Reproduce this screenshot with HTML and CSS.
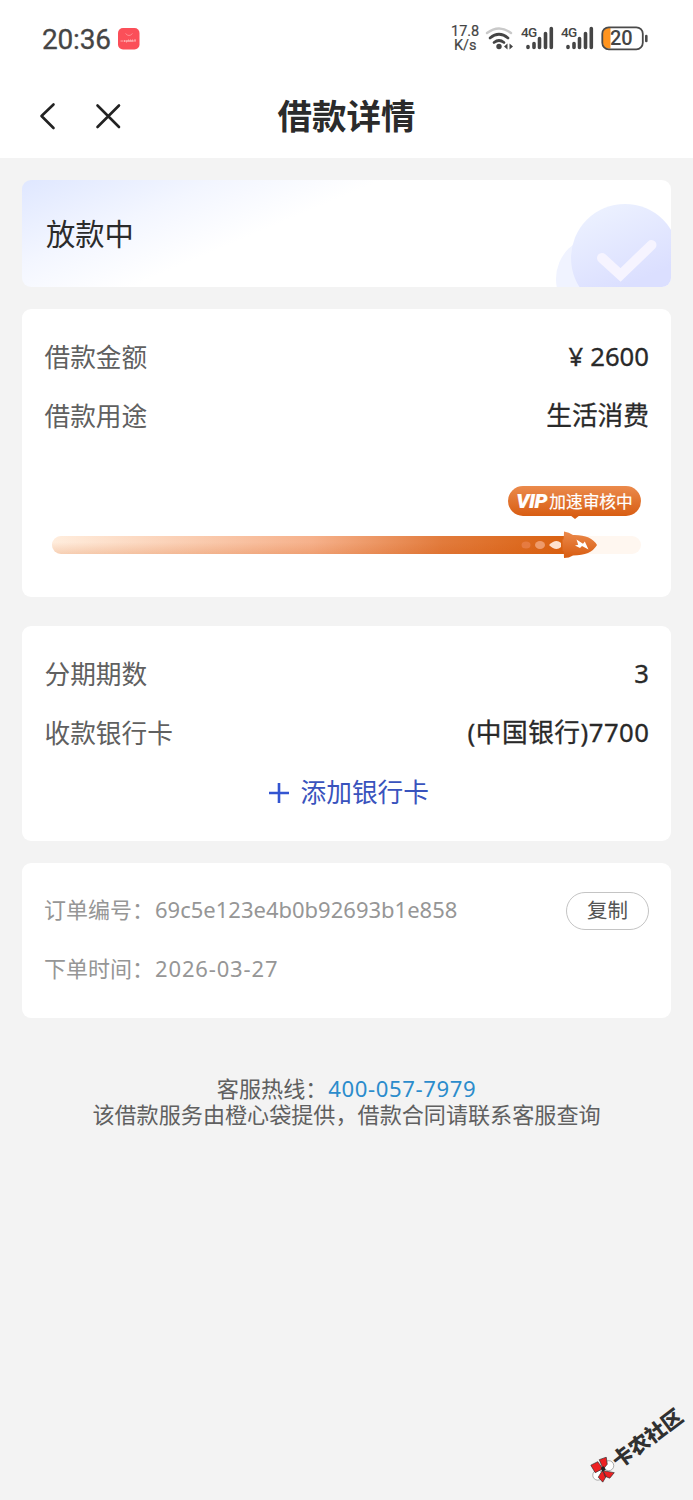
FILE: index.html
```html
<!DOCTYPE html>
<html lang="zh-CN">
<head>
<meta charset="utf-8">
<title>借款详情</title>
<link rel="stylesheet" href="styles.css">
</head>
<body>
<header class="top">
  <div class="status">
    <span class="clock">20:36</span>
    <svg class="app" width="22" height="22" viewBox="0 0 22 22"><rect width="21.500" height="21.500" rx="5" fill="#fb4f59"/><path d="M7.500 5.500q3.500 4 7 0" fill="none" stroke="#ff9a9e" stroke-width=".8"/><path d="M2.500 13h3m1-1v2m1.500-2v2h1v-2m1 2v-2h1v2m1 0v-2h1v2m1 0v-2h1v2m1-2h2m-1 0v2" fill="none" stroke="#ffc0c2" stroke-width=".8"/></svg>
    <span class="speed"><span>17.8</span><span>K/s</span></span>
    <svg class="wifi" width="29" height="24" viewBox="0 0 29 24" fill="none" stroke-linecap="round"><path d="M2 6Q14 -3 26 6" stroke="#c9c9c9" stroke-width="2.400"/><path d="M5 11Q14 3.500 23 11M9 15.500q5-4 10 0" stroke="#454545" stroke-width="2.700"/><circle cx="14" cy="19.500" r="2.700" fill="#454545"/><path d="M22.500 16.500v6l-3.500-3zM24.500 16.500v6l3.500-3z" fill="#454545"/></svg>
    <span class="signal"><svg width="33" height="25" viewBox="0 0 33 25"><path d="M7 20.500v1M13 17.500v4M18.500 12.500v9M24.500 7.500v14M30.300 2.500v19" stroke="#454545" stroke-width="3.600" stroke-linecap="round"/></svg><b>4G</b></span>
    <span class="signal second"><svg width="33" height="25" viewBox="0 0 33 25"><path d="M7 20.500v1M13 17.500v4M18.500 12.500v9M24.500 7.500v14M30.300 2.500v19" stroke="#454545" stroke-width="3.600" stroke-linecap="round"/></svg><b>4G</b></span>
    <span class="battery"><svg width="48" height="25" viewBox="0 0 48 25"><path d="M9.500 2H7.500Q2 2 2 7.500v9Q2 22.500 7.500 22.500h2z" fill="#ff941f"/><rect x="1.300" y="1.300" width="40.500" height="22" rx="6.500" fill="none" stroke="#4a4a4a" stroke-width="1.800"/><path d="M45.300 10v5" stroke="#4a4a4a" stroke-width="2.600" stroke-linecap="round"/></svg><b>20</b></span>
  </div>
  <nav class="nav">
    <svg class="nav-icons" width="100" height="32" viewBox="0 0 100 32" fill="none" stroke="#222" stroke-width="2.600" stroke-linecap="round" stroke-linejoin="round"><path d="M23.500 4.500 11.500 16l12 12M67.500 5.500l21.500 21.500M89 5.500 67.500 27"/></svg>
    <h1>借款详情</h1>
  </nav>
</header>
<main>
  <section class="card state">
    <span>放款中</span>
    <svg width="116" height="85" viewBox="0 0 116 85"><defs><linearGradient id="disc" x1=".2" y1="0" x2=".65" y2="1"><stop offset="0" stop-color="#edf2ff"/><stop offset=".75" stop-color="#dbdfff"/></linearGradient></defs><circle cx="44" cy="77" r="43" fill="#f0f3ff"/><circle cx="70" cy="56" r="54" fill="url(#disc)"/><path d="M47 56 65.500 73 96.500 43" fill="none" stroke="#f6f4ff" stroke-width="10" stroke-linecap="round"/></svg>
  </section>
  <section class="card amount">
    <div class="row"><span>借款金额</span><strong><i>¥</i>2600</strong></div>
    <div class="row"><span>借款用途</span><strong>生活消费</strong></div>
    <div class="progress">
      <div class="bubble"><em>VIP</em><span>加速审核中</span></div>
      <div class="track"><div class="fill"></div><svg class="rocket" width="80" height="28" viewBox="0 0 80 28"><defs><linearGradient id="body" x1="0" y1="1" x2="0" y2="0"><stop stop-color="#d85c10"/><stop offset="1" stop-color="#eb8a4c"/></linearGradient></defs><ellipse cx="9" cy="14" rx="4.500" ry="3.500" fill="#e67b40"/><ellipse cx="23" cy="14" rx="5" ry="4" fill="#ee9b6b"/><path d="M32 14q7-7 12-2v4q-5 5-12-2z" fill="#fee2ce"/><path d="M47 .5q5 .5 9 3.500 18-.5 24 10-6 10.500-24 10.500-4 2.500-9 2.500 0-4-.5-7h-1V8.500h1Q47 4 47 .5z" fill="url(#body)"/><path d="m59.500 8.500 6.500 4.200 1.800-2.200 3.700 8-6.500-3.500-2 2-5-2.500 3.200-.8z" fill="#fff"/></svg></div>
    </div>
  </section>
  <section class="card bank">
    <div class="row"><span>分期期数</span><strong>3</strong></div>
    <div class="row"><span>收款银行卡</span><strong class="account">(中国银行)7700</strong></div>
    <div class="add"><svg width="20" height="20" viewBox="0 0 20 20"><path d="M10 0v20M0 10h20" stroke="#3355d1" stroke-width="2.600"/></svg><span>添加银行卡</span></div>
  </section>
  <section class="card order">
    <div class="row"><span>订单编号：</span><span class="value">69c5e123e4b0b92693b1e858</span><button>复制</button></div>
    <div class="row"><span>下单时间：</span><span class="value date">2026-03-27</span></div>
  </section>
</main>
<footer>
  <p>客服热线：<a>400-057-7979</a></p>
  <p>该借款服务由橙心袋提供，借款合同请联系客服查询</p>
</footer>
<div class="community">
  <svg width="26" height="26" viewBox="0 0 26 26"><circle cx="18.500" cy="9" r="5" fill="#fff" stroke="#777" stroke-width=".6"/><circle cx="7.500" cy="18.500" r="5" fill="#fff" stroke="#777" stroke-width=".6"/><path d="m.5 8.500 7-3.500 5 7-7.500 4zM9 3l7-2.500 1 7-4 5zM13 14l11 2-4.500 5.500-5-2zM12 14l4 5.500-3.500 6-4.500-5z" fill="#ed2022" stroke="#333" stroke-width=".7"/><path d="m10.500 11 3-1.500 2 3.500-3.500 2z" fill="#222"/></svg><span>卡农社区</span>
</div>
</body>
</html>
```

FILE: styles.css
```css
* { box-sizing: border-box; }
body { margin: 0; width: 693px; height: 1500px; position: relative; overflow: hidden; background: #f3f3f3; color: #2b2b2b; font-family: "Noto Sans", "Noto Sans CJK SC", sans-serif; }
h1, p { margin: 0; }
i { font-style: normal; }
svg { display: block; flex: none; }
.top { height: 158px; background: #fff; }
.status { height: 78px; display: flex; align-items: center; padding-left: 42px; color: #454545; }
.clock { padding-top: 2px; font: 28px/40px Roboto, sans-serif; width: 76px; letter-spacing: -.2px; -webkit-text-stroke: .3px #454545; }
.speed { display: flex; flex-direction: column; width: 34px; margin-left: 311px; font: 14.5px/14px Roboto, sans-serif; text-align: left; -webkit-text-stroke: .2px #454545; }
.speed span + span { padding-left: 3px; }
.wifi { margin-right: 7px; }
.signal { position: relative; top: -1px; }
.signal.second { margin-left: 7px; }
.signal b { position: absolute; left: 0; top: -1px; font: 500 13.5px/15px Roboto, sans-serif; letter-spacing: -.7px; }
.battery { position: relative; top: -1px; margin-left: 7px; }
.battery b { position: absolute; left: 9px; top: 0; font: 500 20px/25px Roboto, sans-serif; }
.nav { height: 80px; display: grid; grid-template-columns: 248px 197px 248px; align-items: center; padding-bottom: 4px; }
.nav-icons { margin-left: 30px; }
.nav h1 { font-size: 34.5px; line-height: 50px; font-weight: 700; text-align: center; white-space: nowrap; }
main { padding: 22px 22px 0; }
.card { width: 649px; border-radius: 9px; background: #fff; overflow: hidden; }
.state { height: 107px; display: flex; justify-content: space-between; background: linear-gradient(157deg, #dfe7ff 0, #f3f6ff 22%, #fff 40%); }
.state span { padding: 32px 0 0 24px; font-size: 29.3px; line-height: 44px; }
.state svg { align-self: flex-end; }
.row { display: flex; align-items: center; height: 59px; justify-content: space-between; white-space: nowrap; font-size: 25.7px; line-height: 38px; color: #606060; }
.row strong { padding-bottom: 1px; font-weight: 400; color: #292929; -webkit-text-stroke: .3px #292929; }
.row strong i { margin-right: 7px; }
.row strong.account { letter-spacing: .5px; margin-right: -.5px; }
.amount { height: 288px; margin-top: 22px; padding: 19px 22px 18px 22.5px; }
.progress { padding: 40px 8px 0 7.5px; }
.bubble { width: 133px; height: 30px; margin-left: auto; position: relative; display: flex; align-items: center; justify-content: center; border-radius: 15px; background: linear-gradient(#eb8a4c, #d85d13); color: #fff; font-size: 16.7px; line-height: 24px; -webkit-text-stroke: .2px #fff; }
.bubble span { padding-top: 2px; }
.bubble::after { content: ""; position: absolute; left: 62px; top: 29px; border: 5px solid transparent; border-top: 4px solid #d85d13; border-bottom: 0; }
.bubble em { width: 33px; font: italic 900 20.500px/24px Roboto, sans-serif; letter-spacing: -.5px; }
.track { position: relative; margin-top: 20px; width: 589px; height: 18px; border-radius: 9px; background: #fff7f0; }
.fill { width: 520px; height: 18px; border-radius: 9px 0 0 9px; background: linear-gradient(0deg, rgba(207,77,0,.18), transparent 65%), linear-gradient(90deg, #ffeddd, #f6b18b 50%, #e27b3c 75%, #d9600f); }
.rocket { position: absolute; left: 465px; top: -5px; }
.bank { height: 215px; margin-top: 29px; padding: 19px 22px 18px 22.5px; }
.add { height: 59px; display: flex; align-items: center; justify-content: center; gap: 12px; padding-left: 4px; color: #3953bd; font-size: 25.7px; line-height: 38px; }
.order { height: 155px; margin-top: 22px; padding: 18px 22px; }
.order .row { justify-content: flex-start; font-size: 22px; color: #969696; }
.order .row span { margin-top: -3px; }
.order .row .value { margin-left: 1px; }
.order .row .date { letter-spacing: .85px; }
.row button { width: 83px; height: 38px; margin-left: auto; padding: 0 0 4px; border: 1px solid #c4c4c4; border-radius: 19px; background: #fff; color: #555; font: 20.500px/30px "Noto Sans CJK SC", sans-serif; }
footer { padding-top: 57px; text-align: center; color: #606060; font: 22.1px/26px "Noto Sans", "Noto Sans CJK SC", sans-serif; }
footer a { color: #2b8ccc; margin-left: 1px; letter-spacing: .6px; }
.community { position: absolute; left: 582px; top: 1431px; display: flex; align-items: center; gap: 0; transform: rotate(-37deg); color: #303030; font: 900 20.500px/28px "Noto Sans CJK SC", sans-serif; white-space: nowrap; }
.community svg { transform: rotate(37deg); }
```
